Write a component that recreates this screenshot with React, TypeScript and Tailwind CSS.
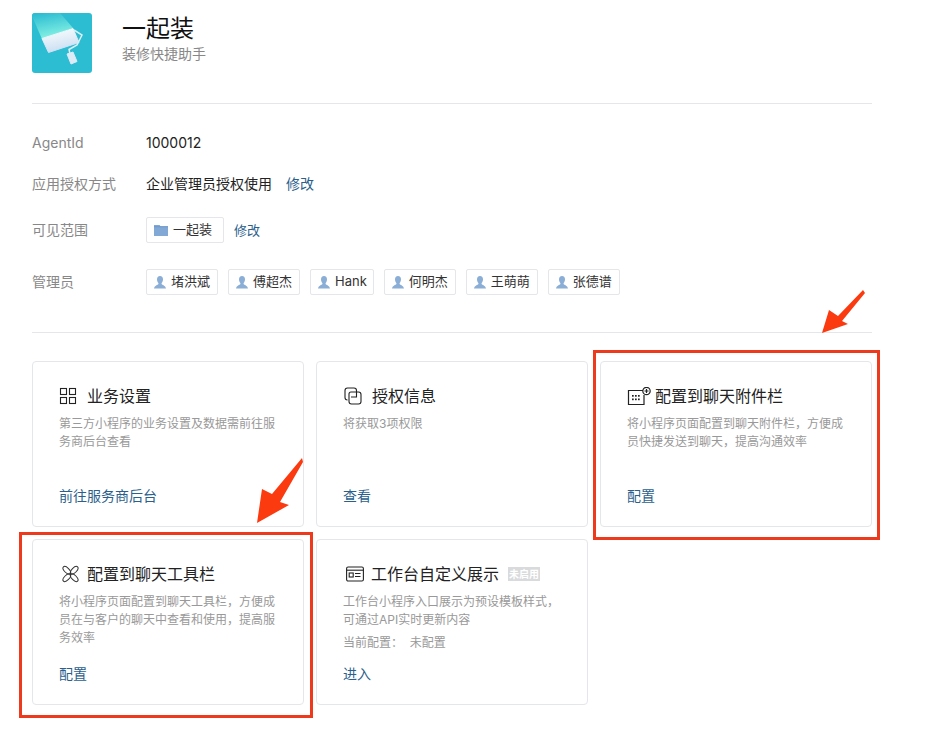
import React from "react";

const FONT = "font-['Inter','Noto_Sans_CJK_SC',sans-serif]";

function Logo() {
  return (
    <svg width="60" height="60" viewBox="0 0 60 60" className="rounded-[3px] shrink-0">
      <defs>
        <linearGradient id="trail" x1="0.3" y1="0" x2="0.6" y2="1">
          <stop offset="0" stopColor="#2dbdd2" />
          <stop offset="0.85" stopColor="#7eeee2" />
        </linearGradient>
        <linearGradient id="body" x1="0.3" y1="0" x2="0.6" y2="1">
          <stop offset="0" stopColor="#f8fdfd" />
          <stop offset="1" stopColor="#c9dcf2" />
        </linearGradient>
      </defs>
      <rect width="60" height="60" fill="#2dbdd2" />
      <polygon points="0,3 0,0 28,0 41,15 10,26" fill="url(#trail)" />
      <polygon points="10,25.500 41,15.500 47,29.500 16.500,39.500" fill="url(#body)" stroke="url(#body)" strokeWidth="1" strokeLinejoin="round" />
      <path d="M42 17 L50 22 L45 32 L37 36.500 L38 41" fill="none" stroke="#d9eef5" strokeWidth="1.500" />
      <polygon points="35,41 41,39 45,48.500 39,51" fill="#dcebf6" stroke="#dcebf6" strokeWidth="1" strokeLinejoin="round" />
    </svg>
  );
}

function Person() {
  return (
    <svg width="12" height="13" viewBox="0 0 12 13" className="shrink-0">
      <path d="M6 0C8 0 9 1.400 9 3.400 9 5 8.300 6.200 7.600 6.900V8C7.600 8.800 11.500 9.300 12 12.500H0C.5 9.300 4.400 8.800 4.400 8V6.900C3.700 6.200 3 5 3 3.400 3 1.400 4 0 6 0z" fill="#8aaed6" />
    </svg>
  );
}

function Folder() {
  return (
    <svg width="14" height="13" viewBox="0 0 15 13" className="shrink-0">
      <path d="M0 0.500h6l1 1.500h8v10.500H0z" fill="#82a9d6" />
      <rect x="0" y="2" width="15" height="1" fill="#6b95c8" />
    </svg>
  );
}

function IconGrid() {
  return (
    <svg width="18" height="18" viewBox="0 0 18 18" fill="none" stroke="#222" strokeWidth="1.100">
      <rect x="1.500" y="1.500" width="6" height="6" />
      <rect x="10.500" y="1.500" width="6" height="6" />
      <rect x="1.500" y="10.500" width="6" height="6" />
      <rect x="10.500" y="10.500" width="6" height="6" />
    </svg>
  );
}

function IconAuth() {
  return (
    <svg width="18" height="18" viewBox="0 0 18 18" fill="none" stroke="#222" strokeWidth="1.100" className="ml-px">
      <path d="M3.500 13C2 13 1 12 1 10.500V3.500C1 2 2 1 3.500 1H10C11.500 1 12.500 2 12.500 3.500V10H7" />
      <path d="M5 8V7C5 5.800 5.800 5 7 5H14.500C16 5 17 6 17 7.500V14.500C17 16 16 17 14.500 17H7.500C6 17 5 16 5 14.500V8" />
    </svg>
  );
}

function IconAttach() {
  return (
    <svg width="24" height="18" viewBox="0 0 24 18" fill="none" stroke="#222" strokeWidth="1.200">
      <path d="M16 3.500H1.500v14h15.500V8" />
      <circle cx="19.500" cy="4" r="3.700" />
      <path d="M19.500 2v4M17.500 4h4" />
      <g fill="#222" stroke="none">
        <rect x="5" y="8" width="1.700" height="1.700" />
        <rect x="8" y="8" width="1.700" height="1.700" />
        <rect x="11" y="8" width="1.700" height="1.700" />
        <rect x="5" y="11.500" width="1.700" height="1.700" />
        <rect x="8" y="11.500" width="1.700" height="1.700" />
        <rect x="11" y="11.500" width="1.700" height="1.700" />
      </g>
    </svg>
  );
}

function IconTool() {
  return (
    <svg width="20" height="20" viewBox="0 0 20 20" fill="none" stroke="#333" strokeWidth="1">
      <ellipse cx="7.800" cy="6.300" rx="4.800" ry="2.400" transform="rotate(45 7.800 6.300)" />
      <ellipse cx="15.200" cy="6.300" rx="4.800" ry="2.400" transform="rotate(-45 15.200 6.300)" />
      <ellipse cx="7.800" cy="13.700" rx="4.800" ry="2.400" transform="rotate(-45 7.800 13.700)" />
      <ellipse cx="15.200" cy="13.700" rx="4.800" ry="2.400" transform="rotate(45 15.200 13.700)" />
    </svg>
  );
}

function IconWork() {
  return (
    <svg width="18" height="16" viewBox="0 0 18 16" fill="none" stroke="#222" strokeWidth="1.100" className="ml-[3px]">
      <rect x="0.600" y="1" width="16.800" height="14" rx="1.500" />
      <path d="M0.600 4.200h16.800" />
      <rect x="3.200" y="7" width="4" height="4" />
      <path d="M9 7.500h5.500M9 10.500h5.500" />
    </svg>
  );
}

function Tag({ children, icon, className = "pr-[7px]" }: { children: React.ReactNode; icon?: React.ReactNode; className?: string }) {
  return (
    <span className={`inline-flex h-[26px] items-center gap-[5px] rounded-[2px] border border-[#e4e6e9] bg-white pl-[7px] text-[13px] text-[#333] ${className}`}>
      {icon}
      {children}
    </span>
  );
}

function Row({
  label,
  className,
  labelClass = "",
  children,
}: {
  label: string;
  className: string;
  labelClass?: string;
  children: React.ReactNode;
}) {
  return (
    <div className={`flex items-center ${className}`}>
      <div className={`w-[114px] shrink-0 text-[14px] text-[#888] ${labelClass}`}>{label}</div>
      {children}
    </div>
  );
}

function Card({
  icon,
  title,
  desc,
  link,
  iconGap = "gap-[10px]",
  badge,
  extra,
}: {
  icon: React.ReactNode;
  title: string;
  desc: string;
  link: string;
  iconGap?: string;
  badge?: string;
  extra?: string;
}) {
  return (
    <div className="flex h-[166px] flex-col rounded-[4px] border border-[#e4e6e9] bg-white px-[26px] pb-[20px] pt-[23px]">
      <div className={`flex h-[22px] items-center ${iconGap}`}>
        {icon}
        <span className="text-[16px] leading-[22px] text-[#222]">{title}</span>
        {badge && (
          <span className="ml-[2px] flex h-[14px] w-[32px] items-center justify-center bg-[#d9dadb] text-[10px] font-bold text-white">
            {badge}
          </span>
        )}
      </div>
      <p className="mt-[8px] text-[12px] leading-[18px] text-[#999]">{desc}</p>
      {extra && <p className="mt-[5px] whitespace-pre text-[12px] leading-[18px] text-[#999]">{extra}</p>}
      <a className="mt-auto text-[14px] leading-[20px] text-[#2b5f8c]">{link}</a>
    </div>
  );
}

export default function App() {
  return (
    <div className={`relative min-h-[731px] w-[934px] overflow-hidden bg-white ${FONT}`}>
      <div className="w-[872px] pl-[32px] pt-[13px]">
        <div className="flex gap-[30px]">
          <Logo />
          <div>
            <div className="mt-[2px] text-[24px] leading-[28px] text-[#111]">一起装</div>
            <div className="mt-px text-[14px] leading-[20px] text-[#888]">装修快捷助手</div>
          </div>
        </div>
        <div className="mt-[30px] h-px bg-[#e4e6e9]" />

        <Row label="AgentId" className="mt-[28px] h-[20px]">
          <span className="text-[14px] text-[#222]">1000012</span>
        </Row>
        <Row label="应用授权方式" className="mt-[21px] h-[20px]">
          <span className="text-[14px] text-[#222]">企业管理员授权使用</span>
          <a className="ml-[14px] text-[14px] text-[#2b5f8c]">修改</a>
        </Row>
        <Row label="可见范围" labelClass="pb-[2px]" className="mt-[24px] h-[26px]">
          <Tag icon={<Folder />} className="pr-[11px]">
            一起装
          </Tag>
          <a className="ml-[10px] pt-[2px] text-[13px] text-[#2b5f8c]">修改</a>
        </Row>
        <Row label="管理员" labelClass="pb-[2px]" className="mt-[26px] h-[26px]">
          <div className="flex gap-[10px]">
            {["堵洪斌", "傅超杰"].map((n) => (
              <Tag key={n} icon={<Person />}>
                {n}
              </Tag>
            ))}
            <Tag icon={<Person />} className="pr-[6px]">
              Hank
            </Tag>
            {["何明杰", "王萌萌", "张德谱"].map((n) => (
              <Tag key={n} icon={<Person />}>
                {n}
              </Tag>
            ))}
          </div>
        </Row>
        <div className="mt-[37px] h-px bg-[#e4e6e9]" />

        <div className="mt-[28px] grid grid-cols-3 gap-[12px]">
          <Card icon={<IconGrid />} title="业务设置" desc="第三方小程序的业务设置及数据需前往服务商后台查看" link="前往服务商后台" />
          <Card icon={<IconAuth />} title="授权信息" desc="将获取3项权限" link="查看" />
          <Card icon={<IconAttach />} iconGap="gap-[4px]" title="配置到聊天附件栏" desc="将小程序页面配置到聊天附件栏，方便成员快捷发送到聊天，提高沟通效率" link="配置" />
          <Card icon={<IconTool />} iconGap="gap-[8px]" title="配置到聊天工具栏" desc="将小程序页面配置到聊天工具栏，方便成员在与客户的聊天中查看和使用，提高服务效率" link="配置" />
          <Card
            icon={<IconWork />}
            iconGap="gap-[7px]"
            title="工作台自定义展示"
            badge="未启用"
            desc="工作台小程序入口展示为预设模板样式，可通过API实时更新内容"
            extra="当前配置：  未配置"
            link="进入"
          />
        </div>
      </div>

      <div className="absolute left-[593px] top-[350px] h-[190px] w-[287px] border-[3px] border-[#ee3a1c]" />
      <div className="absolute left-[19px] top-[532px] h-[186px] w-[294px] border-[3px] border-[#ee3a1c]" />

      <svg className="absolute left-0 top-0 pointer-events-none" width="934" height="731" viewBox="0 0 934 731">
        <polygon points="863,290 838,316 829,310 822,333 848,324 842,321 865,293" fill="#fb3a10" />
        <polygon points="302,458 272,494 262,489 257,523 289,505 280,502 303,462" fill="#fb3a10" />
      </svg>
    </div>
  );
}
